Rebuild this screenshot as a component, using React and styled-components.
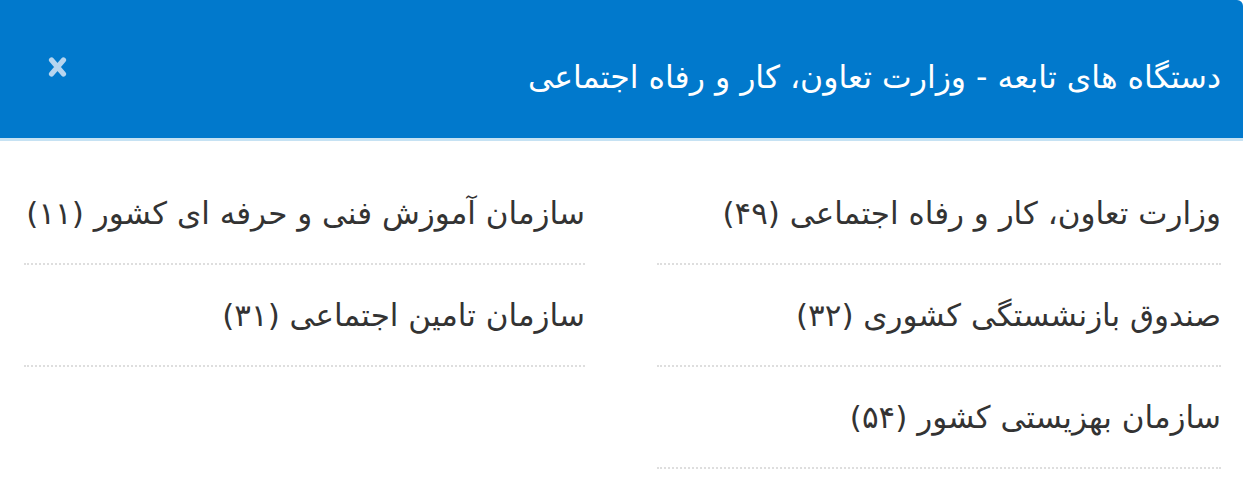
import React from "react";
import styled, { createGlobalStyle } from "styled-components";

const GlobalStyle = createGlobalStyle`
  html, body {
    margin: 0;
    padding: 0;
    background: #fff;
  }
  body {
    font-family: "DejaVu Sans", "Noto Sans Arabic", "Noto Sans", sans-serif;
  }
`;

const Modal = styled.div`
  width: 1243px;
  direction: rtl;
  background: #fff;
`;

const Header = styled.div`
  height: 138px;
  display: flex;
  align-items: center;
  justify-content: space-between;
  padding: 0 22px 0 48px;
  background: #0179cc;
  border-bottom: 3px solid #c6e2f3;
  border-radius: 0 6px 0 0;
  box-sizing: content-box;
`;

const Title = styled.h4`
  margin: 16px 0 0;
  font-size: 31.5px;
  font-weight: 400;
  line-height: 40px;
  color: #fff;
`;

const CloseButton = styled.button`
  border: none;
  background: none;
  padding: 0;
  margin-top: -4px;
  display: flex;
  cursor: pointer;
`;

const CloseIcon = () => (
  <svg width="19" height="22" viewBox="0 0 19 22" aria-hidden="true">
    <path
      d="M3.5 4 L15.5 18 M15.5 4 L3.5 18"
      stroke="#b7d5ef"
      strokeWidth="5.2"
      strokeLinecap="round"
      fill="none"
    />
  </svg>
);

const List = styled.ul`
  list-style: none;
  margin: 0;
  padding: 22px 22px 0 24px;
  display: grid;
  grid-template-columns: 564px 561px;
  column-gap: 72px;
`;

const Item = styled.li`
  padding: 30px 0 30px;
  border-bottom: 2px dotted #dedede;
  font-size: 31px;
  line-height: 40px;
  color: #333;
`;

const items = [
  { name: "وزارت تعاون، کار و رفاه اجتماعی", count: "۴۹" },
  { name: "سازمان آموزش فنی و حرفه ای کشور", count: "۱۱" },
  { name: "صندوق بازنشستگی کشوری", count: "۳۲" },
  { name: "سازمان تامین اجتماعی", count: "۳۱" },
  { name: "سازمان بهزیستی کشور", count: "۵۴" },
];

export default function App() {
  return (
    <>
      <GlobalStyle />
      <Modal>
        <Header>
          <Title>دستگاه های تابعه - وزارت تعاون، کار و رفاه اجتماعی</Title>
          <CloseButton aria-label="بستن">
            <CloseIcon />
          </CloseButton>
        </Header>
        <List>
          {items.map((item) => (
            <Item key={item.name}>
              {item.name} ({item.count})
            </Item>
          ))}
        </List>
      </Modal>
    </>
  );
}
